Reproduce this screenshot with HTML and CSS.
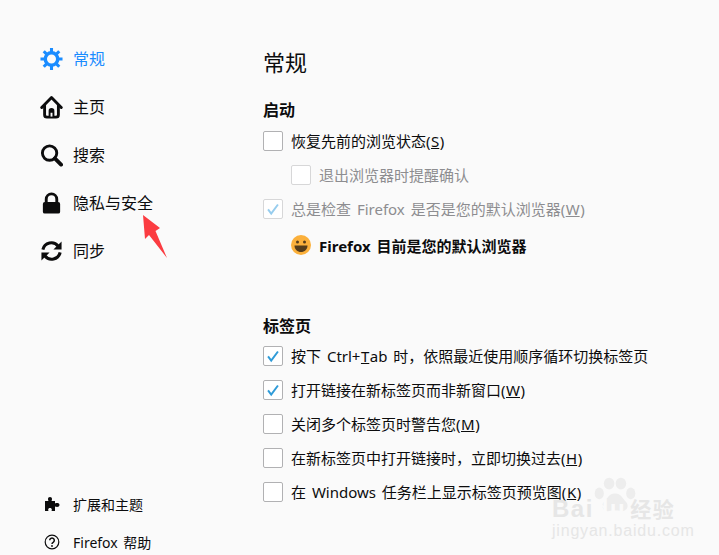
FILE: index.html
```html
<!DOCTYPE html>
<html lang="zh-CN">
<head>
    <meta charset="UTF-8">
    <meta name="viewport" content="width=device-width, initial-scale=1.0">
    <title>选项</title>
    <link rel="stylesheet" href="styles.css">
</head>
<body>

    <div class="page">
        <div class="sidebar">
            <div class="nav">
                <div class="nav-item active">
                    <svg class="nav-icon" viewBox="0 0 24 24" fill="none" stroke="#1a8cff">
                        <circle cx="12" cy="12" r="6.500" stroke-width="3.600"/>
                        <path d="M12 .5v23M.5 12h23M3.900 3.900l16.200 16.200M20.100 3.900 3.900 20.100" stroke-width="3.200" stroke-dasharray="5 13 5"/>
                    </svg>
                    <span>常规</span>
                </div>
                <div class="nav-item">
                    <svg class="nav-icon" viewBox="0 0 24 24" fill="none" stroke="#0c0c0d" stroke-width="3">
                        <path d="M1.800 12.500 12 2.200l10.200 10.300" stroke-linecap="round" stroke-linejoin="round"/>
                        <path d="M4.800 10v10a2.500 2.500 0 0 0 2.500 2.500h9.400a2.500 2.500 0 0 0 2.500-2.500V10"/>
                        <path d="M9 22v-6a3 3 0 0 1 6 0v6z" fill="#0c0c0d" stroke="none"/>
                        <rect x="11" y="18" width="2" height="4" fill="#fafafa" stroke="none"/>
                    </svg>
                    <span>主页</span>
                </div>
                <div class="nav-item">
                    <svg class="nav-icon" viewBox="0 0 24 24" fill="none" stroke="#0c0c0d">
                        <circle cx="10" cy="10" r="7.500" stroke-width="3"/>
                        <path d="m15.500 15.500 6.500 6.500" stroke-width="4" stroke-linecap="round"/>
                    </svg>
                    <span>搜索</span>
                </div>
                <div class="nav-item">
                    <svg class="nav-icon" viewBox="0 0 24 24" fill="#0c0c0d">
                        <path d="M12 1a7 7 0 0 0-7 7v3H5a2 2 0 0 0-2 2v8a2 2 0 0 0 2 2h14a2 2 0 0 0 2-2v-8a2 2 0 0 0-2-2V8a7 7 0 0 0-7-7zm0 3a4 4 0 0 1 4 4v3H8V8a4 4 0 0 1 4-4z" fill-rule="evenodd"/>
                    </svg>
                    <span>隐私与安全</span>
                </div>
                <div class="nav-item">
                    <svg class="nav-icon" viewBox="0 0 24 24" fill="none" stroke="#0c0c0d" stroke-width="3.200">
                        <path d="M3 10.500A9 9 0 0 1 19 7"/>
                        <path d="M21 13.500A9 9 0 0 1 5 17"/>
                        <path d="M22.500 2v8.500H14z" fill="#0c0c0d" stroke="none"/>
                        <path d="M1.500 22v-8.500H10z" fill="#0c0c0d" stroke="none"/>
                    </svg>
                    <span>同步</span>
                </div>
            </div>
            <div class="nav-bottom">
                <div class="nav-small">
                    <svg class="small-icon" viewBox="0 0 16 16" fill="#0c0c0d">
                        <path d="M1 5h3.500C3.500 3 4 1 6 1s2.500 2 1.500 4H11v2.500c2-1 4.500-.5 4.500 1.500S13 11.500 11 10.500V15H7.500c.8-2 0-3-1.500-3s-2.300 1-1.500 3H1z"/>
                    </svg>
                    <span>扩展和主题</span>
                </div>
                <div class="nav-small">
                    <svg class="small-icon" viewBox="0 0 16 16" fill="none" stroke="#0c0c0d" stroke-width="1.200">
                        <circle cx="8" cy="8" r="6.800"/>
                        <path d="M5.700 6.300a2.300 2.300 0 1 1 3.500 2C8.400 8.800 8 9.200 8 10" stroke-width="1.500"/>
                        <circle cx="8" cy="12" r=".9" fill="#0c0c0d" stroke="none"/>
                    </svg>
                    <span>Firefox 帮助</span>
                </div>
            </div>
        </div>

        <div class="content">
            <h1>常规</h1>

            <h2>启动</h2>
            <div class="option">
                <span class="check"></span>
                <span>恢复先前的浏览状态(<u>S</u>)</span>
            </div>
            <div class="option sub disabled">
                <span class="check"></span>
                <span>退出浏览器时提醒确认</span>
            </div>
            <div class="option disabled">
                <span class="check">
                    <svg viewBox="0 0 20 20"><path d="M4.500 10.500 8 15l7.500-10" /></svg>
                </span>
                <span>总是检查 Firefox 是否是您的默认浏览器(<u>W</u>)</span>
            </div>
            <div class="default-note">
                <svg class="smile" viewBox="0 0 20 20">
                    <circle cx="10" cy="10" r="10" fill="#fbb03b"/>
                    <circle cx="6.500" cy="7" r="1.500" fill="#553c1b"/>
                    <circle cx="13.500" cy="7" r="1.500" fill="#553c1b"/>
                    <path d="M3.500 10.500h13c0 4-3 6.500-6.500 6.500s-6.500-2.500-6.500-6.500z" fill="#553c1b"/>
                </svg>
                <strong>Firefox 目前是您的默认浏览器</strong>
            </div>

            <h2 class="tabs-title">标签页</h2>
            <div class="option">
                <span class="check">
                    <svg viewBox="0 0 20 20"><path d="M4.500 10.500 8 15l7.500-10" /></svg>
                </span>
                <span>按下 Ctrl+<u>T</u>ab 时，依照最近使用顺序循环切换标签页</span>
            </div>
            <div class="option">
                <span class="check">
                    <svg viewBox="0 0 20 20"><path d="M4.500 10.500 8 15l7.500-10" /></svg>
                </span>
                <span>打开链接在新标签页而非新窗口(<u>W</u>)</span>
            </div>
            <div class="option">
                <span class="check"></span>
                <span>关闭多个标签页时警告您(<u>M</u>)</span>
            </div>
            <div class="option">
                <span class="check"></span>
                <span>在新标签页中打开链接时，立即切换过去(<u>H</u>)</span>
            </div>
            <div class="option">
                <span class="check"></span>
                <span>在 Windows 任务栏上显示标签页预览图(<u>K</u>)</span>
            </div>
        </div>
    </div>

    <!-- red arrow drawn over the screenshot -->
    <svg class="arrow" viewBox="0 0 26 44">
        <path d="M1 0 18 13 13.500 16 25 43 7 20 3 24z" fill="#fb3c41"/>
    </svg>

    <!-- watermark -->
    <div class="watermark">
        <svg class="paw" viewBox="0 0 64 56" fill="#ededed">
            <ellipse cx="8" cy="24" rx="7" ry="9"/>
            <ellipse cx="23" cy="9" rx="8" ry="9"/>
            <ellipse cx="41" cy="9" rx="8" ry="9"/>
            <ellipse cx="56" cy="24" rx="7" ry="9"/>
            <path d="M32 24c-9 0-12 8-17 13-5 6-1 15 8 14 6-1 12-1 18 0 9 1 13-8 8-14-5-5-8-13-17-13z"/>
        </svg>
        <div class="wm-brand"><span>Bai</span><span class="wm-du">du</span><span class="wm-jy">经验</span></div>
        <div class="wm-url">jingyan.baidu.com</div>
    </div>

</body>
</html>
```

FILE: styles.css
```css
html, body {
    margin: 0;
    padding: 0;
    height: 555px;
    overflow: hidden;
}
body {
    background-color: #fafafa;
    color: #0c0c0d;
    font-family: 'Noto Sans', 'Noto Sans CJK SC', sans-serif;
    font-size: 15px;
    word-spacing: 2px;
    position: relative;
}
u {
    margin: 0 .5px;
}
.page {
    display: flex;
    height: 555px;
}
.sidebar {
    width: 263px;
    box-sizing: border-box;
    padding: 35px 0 0 40px;
    display: flex;
    flex-direction: column;
    justify-content: space-between;
}
.nav-item {
    display: flex;
    align-items: center;
    gap: 10px;
    height: 48px;
    font-size: 16px;
    line-height: 46px;
}
.nav-item.active {
    color: #1a8cff;
}
.nav-icon {
    width: 23px;
    height: 24px;
    flex-shrink: 0;
}
.nav-bottom {
    display: flex;
    flex-direction: column;
    gap: 12px;
}
.nav-small {
    display: flex;
    align-items: center;
    height: 26px;
    font-size: 14px;
}
.nav-small span {
    margin-left: 13px;
}
.small-icon {
    width: 16px;
    height: 16px;
    margin-left: 4px;
    flex-shrink: 0;
}
.content {
    flex: 1;
    padding-top: 46px;
}
h1 {
    margin: 0;
    font-size: 22px;
    font-weight: 400;
    line-height: 32px;
}
h2 {
    margin: 19px 0 1px;
    font-size: 16px;
    font-weight: 700;
    line-height: 26px;
}
h2.tabs-title {
    margin: 49px 0 0;
}
.option {
    display: flex;
    align-items: center;
    gap: 8px;
    height: 34px;
    line-height: 16px;
}
.option.sub {
    margin-left: 28px;
}
.option.disabled {
    color: #8d8d90;
}
.check {
    width: 18px;
    height: 18px;
    border: 1px solid #b1b1b3;
    border-radius: 2px;
    background: #fff;
    flex-shrink: 0;
}
.check svg {
    display: block;
    width: 18px;
    height: 18px;
    fill: none;
    stroke: #2f9bd8;
    stroke-width: 2.200;
}
.disabled .check {
    border-color: #d7d7d8;
}
.disabled .check svg {
    stroke: #97cdee;
}
.default-note {
    display: flex;
    align-items: center;
    gap: 8px;
    height: 38px;
    margin-left: 28px;
}
.smile {
    width: 20px;
    height: 20px;
    flex-shrink: 0;
}
.arrow {
    position: absolute;
    left: 142px;
    top: 215px;
    width: 26px;
    height: 44px;
}
.watermark {
    position: absolute;
    left: 552px;
    top: 475px;
    width: 160px;
    color: #e6e6e6;
    font-family: 'Liberation Sans', sans-serif;
}
.paw {
    position: absolute;
    left: 42px;
    top: 2px;
    width: 42px;
    height: 38px;
}
.wm-brand {
    display: flex;
    align-items: baseline;
    margin-top: 25px;
    font-size: 24px;
    font-weight: 700;
    letter-spacing: 1.500px;
    line-height: 16px;
    position: relative;
}
.wm-du {
    color: #fafafa;
}
.wm-jy {
    font-family: 'Noto Sans CJK SC', sans-serif;
    font-size: 21px;
    margin-left: 4px;
}
.wm-url {
    margin-top: 5px;
    font-size: 16px;
    line-height: 18px;
    letter-spacing: .8px;
}
```
